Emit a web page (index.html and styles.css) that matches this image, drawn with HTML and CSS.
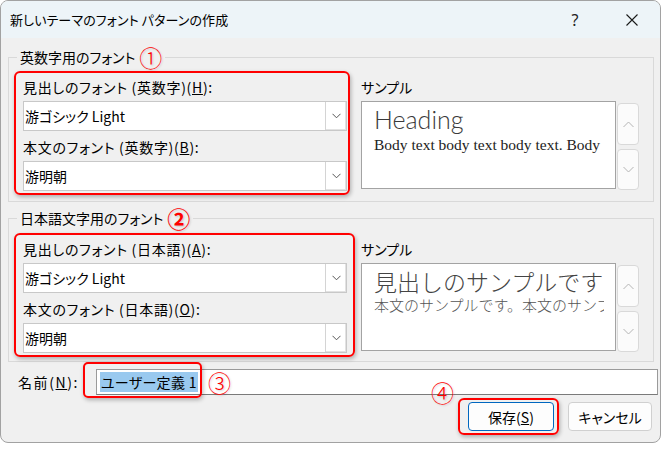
FILE: index.html
```html
<!DOCTYPE html>
<html lang="ja">
<head>
<meta charset="utf-8">
<title>新しいテーマのフォント パターンの作成</title>
<link rel="stylesheet" href="styles.css">
</head>
<body>
<div class="window">
  <div class="titlebar">
    <span class="title">新しいテーマのフォント パターンの作成</span>
    <span class="help">?</span>
    <span class="close"><svg width="14" height="14" viewBox="0 0 14 14"><path d="M1.5 1.5L12.5 12.5M12.5 1.5L1.5 12.5" stroke="#1a1a1a" stroke-width="1.1" fill="none"/></svg></span>
  </div>
  <div class="content">
    <fieldset class="group">
      <legend>英数字用のフォント<span class="num">①</span></legend>
      <div class="group-body">
        <div class="mark mark-a">
          <div class="field-label">見出しのフォント (英数字)(<u>H</u>):</div>
          <div class="combo"><span class="combo-text">游ゴシック Light</span><span class="combo-btn"><svg width="9" height="6" viewBox="0 0 9 6"><path d="M0.5 0.8L4.5 4.8L8.5 0.8" stroke="#555" fill="none"/></svg></span></div>
          <div class="field-label next">本文のフォント (英数字)(<u>B</u>):</div>
          <div class="combo"><span class="combo-text">游明朝</span><span class="combo-btn"><svg width="9" height="6" viewBox="0 0 9 6"><path d="M0.5 0.8L4.5 4.8L8.5 0.8" stroke="#555" fill="none"/></svg></span></div>
        </div>
        <div class="sample">
          <div class="field-label">サンプル</div>
          <div class="sample-row">
            <div class="preview">
              <div class="pv-head latin">Heading</div>
              <div class="pv-body latin">Body text body text body text. Body</div>
            </div>
            <div class="spin">
              <div class="spin-btn up"><svg width="11" height="7" viewBox="0 0 11 7"><path d="M0.5 6L5.5 1L10.5 6" stroke="#b4b4b4" fill="none"/></svg></div>
              <div class="spin-btn down"><svg width="11" height="7" viewBox="0 0 11 7"><path d="M0.5 1L5.5 6L10.5 1" stroke="#b4b4b4" fill="none"/></svg></div>
            </div>
          </div>
        </div>
      </div>
    </fieldset>

    <fieldset class="group group-jp">
      <legend>日本語文字用のフォント<span class="num bold">②</span></legend>
      <div class="group-body">
        <div class="mark mark-b">
          <div class="field-label">見出しのフォント (日本語)(<u>A</u>):</div>
          <div class="combo"><span class="combo-text">游ゴシック Light</span><span class="combo-btn"><svg width="9" height="6" viewBox="0 0 9 6"><path d="M0.5 0.8L4.5 4.8L8.5 0.8" stroke="#555" fill="none"/></svg></span></div>
          <div class="field-label next">本文のフォント (日本語)(<u>O</u>):</div>
          <div class="combo"><span class="combo-text">游明朝</span><span class="combo-btn"><svg width="9" height="6" viewBox="0 0 9 6"><path d="M0.5 0.8L4.5 4.8L8.5 0.8" stroke="#555" fill="none"/></svg></span></div>
        </div>
        <div class="sample sample-b">
          <div class="field-label">サンプル</div>
          <div class="sample-row">
            <div class="preview">
              <div class="pv-head jp">見出しのサンプルです</div>
              <div class="pv-body jp">本文のサンプルです。本文のサンプル</div>
            </div>
            <div class="spin">
              <div class="spin-btn up"><svg width="11" height="7" viewBox="0 0 11 7"><path d="M0.5 6L5.5 1L10.5 6" stroke="#b4b4b4" fill="none"/></svg></div>
              <div class="spin-btn down"><svg width="11" height="7" viewBox="0 0 11 7"><path d="M0.5 1L5.5 6L10.5 1" stroke="#b4b4b4" fill="none"/></svg></div>
            </div>
          </div>
        </div>
      </div>
    </fieldset>

    <div class="name-row">
      <span class="name-label">名前(<u>N</u>):</span>
      <div class="name-input"><span class="selected">ユーザー定義 1</span></div>
      <div class="mark-overlay"></div>
      <span class="num num-3">③</span>
    </div>

    <div class="button-row">
      <div class="mark mark-btn">
        <span class="num num-4">④</span>
        <div class="btn primary">保存(<u>S</u>)</div>
      </div>
      <div class="btn cancel">キャンセル</div>
    </div>
  </div>
</div>
</body>
</html>
```

FILE: styles.css
```css
html, body {
  margin: 0;
  padding: 0;
  background: #ffffff;
}

body {
  font-family: "Noto Sans CJK JP", "Noto Sans", sans-serif;
  font-size: 14px;
  color: #000;
  font-feature-settings: "palt";
}

.window {
  width: 661px;
  height: 443px;
  box-sizing: border-box;
  border: 1px solid #a2a2a2;
  border-radius: 8px;
  background: #f0f0f0;
  overflow: hidden;
}

.titlebar {
  height: 37px;
  background: #edf4f8;
  display: flex;
  align-items: center;
  padding-left: 9px;
}

.title {
  flex: 1;
  font-size: 13px;
  letter-spacing: 0.1px;
}

.help {
  width: 20px;
  text-align: center;
  font-size: 16px;
  margin-right: 19px;
  font-family: "Noto Sans", sans-serif;
  color: #222;
}

.close {
  width: 56px;
  height: 37px;
  display: flex;
  align-items: center;
  justify-content: center;
}

.content {
  padding: 9px 6px 0 7px;
}

.group {
  margin: 0;
  padding: 0 5px 6px 5px;
  border: 1px solid #d9d9d9;
  min-width: 0;
}

.group legend {
  margin-left: 3px;
  padding: 0 3px;
  height: 20px;
  line-height: 20px;
}

.group-jp {
  margin-top: 6px;
  padding-bottom: 4px;
}

.num {
  display: inline-block;
  color: #f00;
  font-size: 23px;
  font-weight: 300;
  line-height: 20px;
  height: 20px;
  vertical-align: top;
  margin-left: 4px;
  text-shadow: 1px 1px 2px rgba(0, 0, 0, 0.18);
}

.num.bold {
  font-weight: bold;
}

.group-body {
  display: flex;
  margin-top: 4px;
}

.group-jp .group-body {
  margin-top: 5px;
}

.mark {
  border: 2px solid #f00;
  border-radius: 6px;
  box-shadow: 1px 2px 4px rgba(0, 0, 0, 0.28);
  box-sizing: border-box;
}

.mark-a {
  width: 336px;
  padding: 2px 1px 2px 7px;
}

.mark-b {
  width: 341px;
  padding: 2px 6px 2px 7px;
}

.field-label {
  height: 24px;
  line-height: 24px;
  white-space: nowrap;
  letter-spacing: 0.7px;
}

.sample .field-label {
  letter-spacing: 0;
}

.field-label.next {
  margin-top: 4px;
}

.combo {
  height: 30px;
  box-sizing: border-box;
  margin-top: 2px;
  border: 1px solid #c8c8c8;
  background: #fff;
  display: flex;
}

.combo-text {
  flex: 1;
  padding-left: 1px;
  line-height: 28px;
  font-size: 14px;
}

.combo-btn {
  width: 20px;
  border-left: 1px solid #d4d4d4;
  box-shadow: inset -1px -1px 0 #e2e2e2;
  display: flex;
  align-items: center;
  justify-content: center;
}

.sample {
  margin-left: 11px;
  padding-top: 4px;
}

.sample-b {
  margin-left: 6px;
}

.sample-row {
  display: flex;
  margin-top: 2px;
}

.preview {
  width: 255px;
  height: 88px;
  box-sizing: border-box;
  border: 1px solid #a3a3a3;
  background: #fff;
  padding: 2px 11px 0 12px;
  overflow: hidden;
  white-space: nowrap;
}

.pv-head {
  font-size: 24px;
  font-weight: 300;
  line-height: 30px;
  color: #3a3a3a;
  font-feature-settings: normal;
}

.pv-head.latin {
  font-family: "Lato", "Noto Sans", sans-serif;
  font-size: 25px;
}

.pv-head.jp {
  font-size: 23px;
  color: #444;
  overflow: hidden;
}

.pv-body {
  font-size: 14px;
  line-height: 18px;
  color: #222;
}

.pv-body.latin {
  font-family: "Liberation Serif", serif;
  font-size: 15.5px;
  margin-top: 2px;
}

.pv-body.jp {
  font-size: 15px;
  color: #555;
  font-weight: 300;
  font-feature-settings: normal;
  overflow: hidden;
}

.spin {
  margin-left: 1px;
  width: 22px;
  padding-top: 2px;
}

.spin-btn {
  box-sizing: border-box;
  border: 1px solid #d9d9d9;
  border-radius: 4px;
  background: #fbfbfb;
  display: flex;
  align-items: center;
  justify-content: center;
}

.spin-btn.up {
  height: 42px;
}

.spin-btn.down {
  height: 41px;
  margin-top: 4px;
}

.name-row {
  position: relative;
  display: flex;
  align-items: center;
  height: 26px;
  margin-top: 7px;
  margin-right: -4px;
}

.name-label {
  width: 88px;
  padding-left: 10px;
  box-sizing: border-box;
  letter-spacing: 1.6px;
}

.name-input {
  flex: 1;
  height: 26px;
  box-sizing: border-box;
  border: 1px solid #9a9a9a;
  border-bottom-color: #7a7a7a;
  background: #fff;
  padding: 2px 0 0 3px;
}

.selected {
  display: inline-block;
  height: 20px;
  line-height: 20px;
  background: #99c9ef;
  padding: 0 1px;
  letter-spacing: 0.3px;
}

.mark-overlay {
  position: absolute;
  left: 75px;
  top: -7px;
  width: 119px;
  height: 36px;
  box-sizing: border-box;
  border: 2px solid #f00;
  border-radius: 5px;
  box-shadow: 1px 2px 4px rgba(0, 0, 0, 0.28);
}

.num-3 {
  position: absolute;
  left: 200px;
  top: 1px;
  margin: 0;
  height: 24px;
  line-height: 24px;
}

.button-row {
  display: flex;
  justify-content: flex-end;
  align-items: center;
  margin-top: 3px;
}

.mark-btn {
  position: relative;
  padding: 2px 3px 2px 8px;
}

.num-4 {
  position: absolute;
  left: -29px;
  top: -20px;
  margin: 0;
  height: 24px;
  line-height: 24px;
}

.btn {
  height: 29px;
  box-sizing: border-box;
  border-radius: 4px;
  background: #fdfdfd;
  display: flex;
  align-items: center;
  justify-content: center;
}

.btn.primary {
  width: 86px;
  border: 1px solid #0067c0;
}

.btn.cancel {
  width: 84px;
  border: 1px solid #d0d0d0;
  margin-left: 9px;
  margin-right: 2px;
}
```
